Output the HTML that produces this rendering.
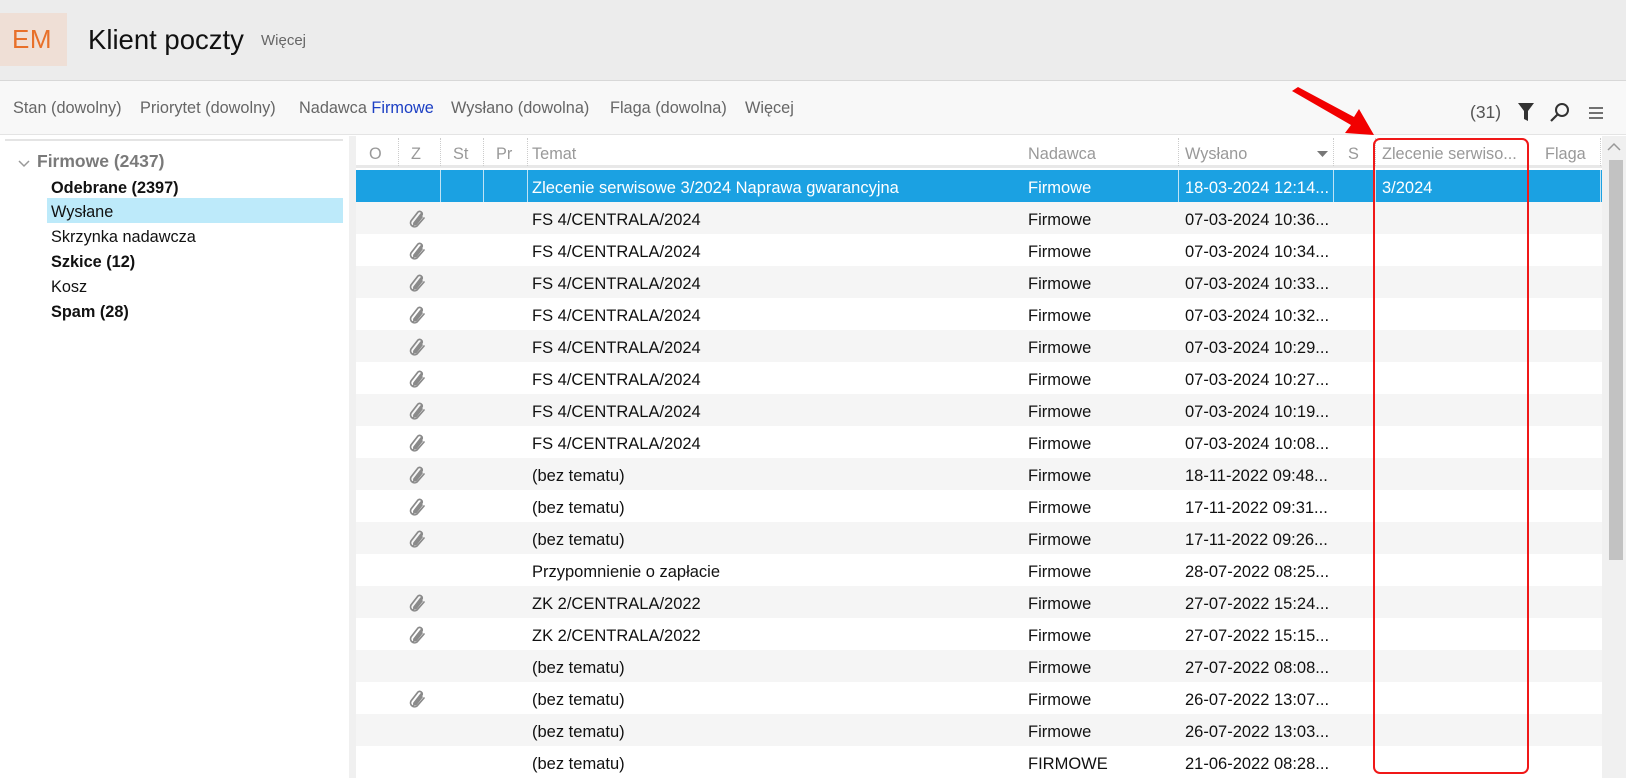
<!DOCTYPE html>
<html><head><meta charset="utf-8"><style>
*{margin:0;padding:0;box-sizing:border-box}
body{width:1626px;height:778px;overflow:hidden;background:#fff;font-family:"Segoe UI","Liberation Sans",sans-serif;position:relative}
.a{position:absolute;white-space:nowrap}
#hdr{left:0;top:0;width:1626px;height:81px;background:#ececec;border-bottom:1px solid #d8d8d8}
#flt{left:0;top:81px;width:1626px;height:54px;background:#f8f8f8;border-bottom:1px solid #e4e4e4}
.f{font-size:16.3px;color:#666;top:99px}
.li{font-size:16.3px;color:#111;left:51px}
.row{position:absolute;left:356px;width:1246px;height:32px;font-size:16.5px;color:#111}
.row span{position:absolute;top:9px;white-space:nowrap}
.g{background:#f5f5f5}
.th{position:absolute;top:145px;font-size:16.3px;color:#999}
.dv{position:absolute;top:138px;height:28px;border-left:1px dotted #ccc}
</style></head><body>
<div class="a" id="hdr"></div>
<div class="a" style="left:0;top:13px;width:67px;height:53px;background:#efdfd6"></div>
<div class="a" style="left:12px;top:24px;font-size:26px;color:#e8702a;letter-spacing:0.5px">EM</div>
<div class="a" style="left:88px;top:24px;font-size:27.5px;color:#111">Klient poczty</div>
<div class="a" style="left:261px;top:32px;font-size:15px;color:#666">Więcej</div>
<div class="a" id="flt"></div>
<div class="a f" style="left:13px">Stan (dowolny)</div>
<div class="a f" style="left:140px">Priorytet (dowolny)</div>
<div class="a f" style="left:299px">Nadawca <span style="color:#1c3fc4">Firmowe</span></div>
<div class="a f" style="left:451px">Wysłano (dowolna)</div>
<div class="a f" style="left:610px">Flaga (dowolna)</div>
<div class="a f" style="left:745px">Więcej</div>
<div class="a" style="left:1470px;top:102px;font-size:17.5px;color:#555">(31)</div>
<svg class="a" style="left:1517px;top:102px" width="18" height="20"><path d="M1 1H17L11 9V19L7 17V9Z" fill="#333"/></svg>
<svg class="a" style="left:1549px;top:102px" width="22" height="22"><circle cx="13" cy="8" r="6" fill="none" stroke="#333" stroke-width="2"/><path d="M9 12L2 19" stroke="#333" stroke-width="2.2"/></svg>
<svg class="a" style="left:1589px;top:107px" width="14" height="12"><path d="M0 1H14M0 6H14M0 11H14" stroke="#444" stroke-width="1.6"/></svg>
<!-- left panel -->
<div class="a" style="left:5px;top:139px;width:338px;height:2px;background:#e4e4e4"></div>
<div class="a" style="left:349px;top:136px;width:7px;height:642px;background:#f0f0f0"></div>
<svg class="a" style="left:18px;top:159px" width="12" height="10"><path d="M1 2L6 7L11 2" fill="none" stroke="#999" stroke-width="1.5"/></svg>
<div class="a" style="left:37px;top:151px;font-size:17.5px;font-weight:bold;color:#7a7a7a">Firmowe (2437)</div>
<div class="a li" style="top:179px;font-weight:bold">Odebrane (2397)</div>
<div class="a" style="left:47px;top:198px;width:296px;height:25px;background:#bdeafa"></div>
<div class="a li" style="top:203px">Wysłane</div>
<div class="a li" style="top:228px">Skrzynka nadawcza</div>
<div class="a li" style="top:253px;font-weight:bold">Szkice (12)</div>
<div class="a li" style="top:278px">Kosz</div>
<div class="a li" style="top:303px;font-weight:bold">Spam (28)</div>
<!-- table header -->
<div class="a" style="left:356px;top:165px;width:1246px;height:3px;background:#e8e8e8"></div>
<div class="th" style="left:369px">O</div>
<div class="th" style="left:411px">Z</div>
<div class="th" style="left:453px">St</div>
<div class="th" style="left:496px">Pr</div>
<div class="th" style="left:532px">Temat</div>
<div class="th" style="left:1028px">Nadawca</div>
<div class="th" style="left:1185px">Wysłano</div>
<svg class="a" style="left:1317px;top:151px" width="11" height="7"><path d="M0 0H11L5.5 6Z" fill="#777"/></svg>
<div class="th" style="left:1348px">S</div>
<div class="th" style="left:1382px">Zlecenie serwiso...</div>
<div class="th" style="left:1545px">Flaga</div>
<div class="dv" style="left:398px"></div><div class="dv" style="left:440px"></div><div class="dv" style="left:483px"></div><div class="dv" style="left:527px"></div><div class="dv" style="left:1178px"></div><div class="dv" style="left:1333px"></div><div class="dv" style="left:1375px"></div><div class="dv" style="left:1600px"></div>
<!-- scrollbar -->
<div class="a" style="left:1602px;top:136px;width:24px;height:642px;background:#f0f0f0"></div>
<svg class="a" style="left:1607px;top:142px" width="14" height="9"><path d="M1 8L7 2L13 8" fill="none" stroke="#999" stroke-width="1.5"/></svg>
<div class="a" style="left:1609px;top:160px;width:14px;height:400px;background:#c2c2c2"></div>
<div id="rows"></div>
<script>
var clip='<svg style="position:absolute;left:52px;top:8px" width="20" height="20" viewBox="0 0 20 20"><path d="M5 16L14 5A2.6 2.6 0 0 0 10 2L3 11A4 4 0 0 0 9 16L16 8M13 4L6 13A1.3 1.3 0 0 0 8 14.5L14 7" fill="none" stroke="#8a8a8a" stroke-width="1.7" stroke-linecap="round"/></svg>';
var d=[["Zlecenie serwisowe 3/2024 Naprawa gwarancyjna","Firmowe","18-03-2024 12:14...",0],
["FS 4/CENTRALA/2024","Firmowe","07-03-2024 10:36...",1],
["FS 4/CENTRALA/2024","Firmowe","07-03-2024 10:34...",1],
["FS 4/CENTRALA/2024","Firmowe","07-03-2024 10:33...",1],
["FS 4/CENTRALA/2024","Firmowe","07-03-2024 10:32...",1],
["FS 4/CENTRALA/2024","Firmowe","07-03-2024 10:29...",1],
["FS 4/CENTRALA/2024","Firmowe","07-03-2024 10:27...",1],
["FS 4/CENTRALA/2024","Firmowe","07-03-2024 10:19...",1],
["FS 4/CENTRALA/2024","Firmowe","07-03-2024 10:08...",1],
["(bez tematu)","Firmowe","18-11-2022 09:48...",1],
["(bez tematu)","Firmowe","17-11-2022 09:31...",1],
["(bez tematu)","Firmowe","17-11-2022 09:26...",1],
["Przypomnienie o zapłacie","Firmowe","28-07-2022 08:25...",0],
["ZK 2/CENTRALA/2022","Firmowe","27-07-2022 15:24...",1],
["ZK 2/CENTRALA/2022","Firmowe","27-07-2022 15:15...",1],
["(bez tematu)","Firmowe","27-07-2022 08:08...",0],
["(bez tematu)","Firmowe","26-07-2022 13:07...",1],
["(bez tematu)","Firmowe","26-07-2022 13:03...",0],
["(bez tematu)","FIRMOWE","21-06-2022 08:28...",0]];
var h='';
d.forEach(function(r,i){var top=170+i*32;var cls=i==0?'':(i%2?' g':'');
var st=i==0?'background:#1ba1e2;color:#fff;height:32px;':'';
h+='<div class="row'+cls+'" style="top:'+top+'px;'+st+'">';
if(i==0){[84,127,171,822,977,1019,1244].forEach(function(x){h+='<div style="position:absolute;left:'+x+'px;top:0;width:1px;height:32px;background:#bfe3f5"></div>'});}
if(r[3])h+=clip;
h+='<span style="left:176px">'+r[0]+'</span><span style="left:672px">'+r[1]+'</span><span style="left:829px">'+r[2]+'</span>';
if(i==0)h+='<span style="left:1026px">3/2024</span>';
h+='</div>';});
document.getElementById('rows').innerHTML=h;
</script>
<!-- red box & arrow -->
<div class="a" style="left:1373px;top:138px;width:156px;height:636px;border:2px solid #f01818;border-radius:7px"></div>
<svg class="a" style="left:1290px;top:85px" width="90" height="60"><path d="M2 6L8 2L64 32L69 24L84 50L55 48L61 40Z" fill="#f20000"/></svg>
</body></html>
